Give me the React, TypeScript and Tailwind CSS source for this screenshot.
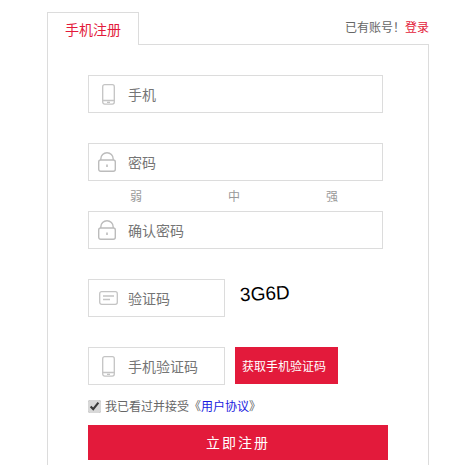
const font = { fontFamily: '"Noto Sans CJK SC", "Liberation Sans", sans-serif' };

function PhoneIcon() {
  return (
    <svg width="13" height="21" viewBox="0 0 13 21" fill="none" stroke="#c4c4c4" strokeWidth="1.3">
      <rect x="0.7" y="0.7" width="11.6" height="19.4" rx="2" />
      <path d="M0.7 16.5h11.6M5 18.4h3" />
    </svg>
  );
}

function LockIcon() {
  return (
    <svg className="-ml-[3px]" width="18" height="20" viewBox="0 0 18 20" fill="none" stroke="#bcbcbc" strokeWidth="1.4">
      <path d="M2.8 8V7a6.2 6.2 0 0 1 12.4 0v1" />
      <rect x="0.7" y="8" width="16.6" height="11.3" rx="2" />
      <path d="M9 12.5v2.5" strokeWidth="1.6" />
    </svg>
  );
}

function CodeIcon() {
  return (
    <svg width="19" height="14" viewBox="0 0 19 14" fill="none" stroke="#c4c4c4" strokeWidth="1.3">
      <rect x="0.7" y="0.7" width="17.6" height="12.6" rx="2" />
      <path d="M4 5h11M4 8.5h7" />
    </svg>
  );
}

function Field({ icon, label, className }: { icon: React.ReactNode; label: string; className: string }) {
  return (
    <div className={`flex h-[38px] items-center border border-[#dcdcdc] ${className}`}>
      <span className="flex w-[39px] shrink-0 justify-center">{icon}</span>
      <span className="text-[14px] text-[#757575]">{label}</span>
    </div>
  );
}

export default function App() {
  return (
    <div className="h-[465px] w-[464px] overflow-hidden bg-white pl-[47px] pt-[12px]" style={font}>
      <div className="flex h-[32px] w-[382px] items-end justify-between">
        <div className="z-10 -mb-[1px] flex h-[33px] w-[92px] items-center justify-center border border-b-0 border-[#dcdcdc] bg-white text-[14px] text-[#e31a3b]">
          手机注册
        </div>
        <div className="mb-[4px] text-[12px] leading-[26px] text-[#666]">
          已有账号！<span className="text-[#e31a3b]">登录</span>
        </div>
      </div>
      <div className="h-[430px] w-[382px] border border-[#dcdcdc] pl-[40px] pt-[30px]">
        <Field icon={<PhoneIcon />} label="手机" className="w-[295px]" />
        <Field icon={<LockIcon />} label="密码" className="mt-[30px] w-[295px]" />
        <div className="flex h-[30px] w-[295px] items-center text-[12px] text-[#999]">
          <span className="ml-[42px] w-[98px]">弱</span>
          <span className="w-[98px]">中</span>
          <span>强</span>
        </div>
        <Field icon={<LockIcon />} label="确认密码" className="w-[295px]" />
        <div className="mt-[30px] flex">
          <Field icon={<CodeIcon />} label="验证码" className="w-[137px]" />
          <div className="ml-[15px] mt-[2px] h-[26px] -rotate-3 text-[19px] leading-[26px] text-black [font-family:'Liberation_Sans',sans-serif]">
            3G6D
          </div>
        </div>
        <div className="mt-[30px] flex">
          <Field icon={<PhoneIcon />} label="手机验证码" className="w-[137px]" />
          <button className="ml-[10px] h-[37px] w-[103px] bg-[#e31a3b] pr-[5px] text-[12px] text-white">获取手机验证码</button>
        </div>
        <label className="mt-[12px] flex h-[18px] items-center text-[12px] text-[#666]">
          <input type="checkbox" defaultChecked readOnly className="h-[13px] w-[13px] accent-[#d8d8d8]" />
          <span className="ml-[4px]">
            我已看过并接受《<span className="text-[#1a1ae0]">用户协议</span>》
          </span>
        </label>
        <button className="mt-[10px] h-[35px] w-[300px] bg-[#e31a3b] text-[14px] tracking-[2px] text-white">立即注册</button>
      </div>
    </div>
  );
}
